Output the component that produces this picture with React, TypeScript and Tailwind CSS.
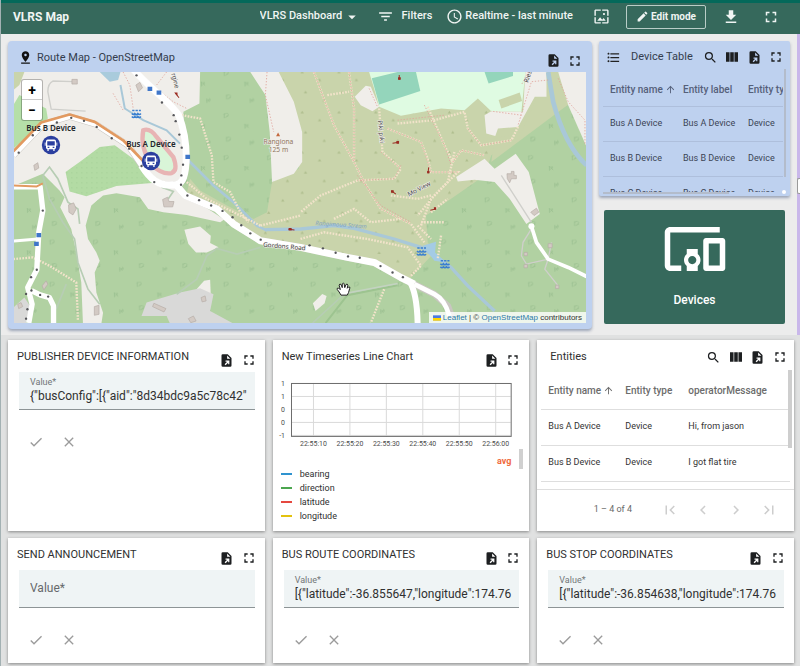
import React, { useId } from "react";
import {
  MdAccessTime,
  MdArrowDropDown,
  MdArrowUpward,
  MdCheck,
  MdChevronLeft,
  MdChevronRight,
  MdClose,
  MdDownload,
  MdEdit,
  MdFilterList,
  MdFirstPage,
  MdFormatListBulleted,
  MdFullscreen,
  MdLastPage,
  MdOutlineDevicesOther,
  MdPinDrop,
  MdSearch,
  MdViewColumn,
  MdWallpaper,
} from "react-icons/md";

function ExportIcon() {
  return (
    <svg viewBox="0 0 24 24" className="size-[15px]" fill="currentColor" aria-hidden="true">
      <path
        fillRule="evenodd"
        d="M6 2h8l6 6v12a2 2 0 0 1-2 2H6a2 2 0 0 1-2-2V4a2 2 0 0 1 2-2Zm7 1.800V9h5.200L13 3.800ZM10.500 12v2h2.600L9 18.100l1.500 1.500 4.100-4.100V18h2v-6h-6.100Z"
      />
    </svg>
  );
}

function IconButton({ label, children }: { label: string; children: React.ReactNode }) {
  return (
    <button type="button" aria-label={label} className="flex size-[22px] items-center justify-center">
      {children}
    </button>
  );
}

function WidgetActions({ table = false }: { table?: boolean }) {
  return (
    <div className="flex items-center text-[#1d1f21]">
      {table && (
        <>
          <IconButton label="Search">
            <MdSearch size={15} />
          </IconButton>
          <IconButton label="Columns to display">
            <MdViewColumn size={16} />
          </IconButton>
        </>
      )}
      <IconButton label="Export widget">
        <ExportIcon />
      </IconButton>
      <IconButton label="Fullscreen">
        <MdFullscreen size={16} />
      </IconButton>
    </div>
  );
}

const roadDots: [number, number][] = [
  [58, 262], [100, 210], [172, 172], [215, 158], [253, 167], [291, 185], [336, 219], [388, 250], [425, 302],
  [463, 350], [543, 358], [562, 390], [597, 404], [633, 420], [667, 436], [697, 455], [723, 479], [750, 503],
  [781, 522], [927, 539], [967, 548], [1005, 561], [1042, 572], [1077, 576], [1139, 601], [1175, 620], [1206, 634],
  [410, 31], [486, 112], [521, 150], [527, 168], [538, 208], [545, 247], [549, 298], [544, 330],
  [130, 435], [112, 612], [95, 634], [80, 684], [96, 674], [122, 687], [146, 692], [84, 730], [80, 758],
];

function Waves({ x, y }: { x: number; y: number }) {
  return (
    <g transform={`translate(${x} ${y})`} stroke="#3a7fd0" strokeWidth="4.500" fill="none">
      <path d="M-13 -9h7M-3 -9h7M7 -9h6M-14 0q5 6 9 0q5 6 9 0q5 6 9 0M-14 9q5 6 9 0q5 6 9 0q5 6 9 0" />
    </g>
  );
}

function MapArtwork() {
  return (
    <svg
      viewBox="42 21 1713 750"
      preserveAspectRatio="xMidYMid slice"
      className="block h-full w-full"
      role="img"
      aria-label="Street map around Gordons Road"
      fontFamily="'Noto Sans', sans-serif"
    >
      <defs>
        <pattern id="trees" width="130" height="126" patternUnits="userSpaceOnUse">
          <rect width="130" height="126" fill="#b1d1a2" />
          <g stroke="#9cc091" strokeWidth="2.500" fill="none">
            <path d="M20 22l8-3m-6 0v14m8-16q8 4 0 12m-5 2l10-6" />
            <path d="M82 52l8 2m-6-4v14m8-14q-4 8 3 12m-9-2l9-6" />
            <path d="M28 92l8-3m-7 0v14m8-15q8 4 0 12m-6 2l11-5" />
            <path d="M98 106l9-2m-7-4v14m8-15q5 8-2 12m-4-2l9-6" />
          </g>
        </pattern>
        <pattern id="scrub" width="110" height="120" patternUnits="userSpaceOnUse">
          <rect width="110" height="120" fill="#c9d4ab" />
          <g fill="#afbe8e">
            <path d="M20 25l5-8 5 8ZM72 48l5-8 5 8ZM30 85l5-8 5 8ZM86 110l5-8 5 8Z" />
          </g>
        </pattern>
        <pattern id="orchard" width="15" height="15" patternUnits="userSpaceOnUse">
          <rect width="15" height="15" fill="#b3dba4" />
          <circle cx="7" cy="7" r="1.500" fill="#9fca92" />
        </pattern>
      </defs>

      <rect x="42" y="21" width="1713" height="750" fill="url(#trees)" />

      {/* open land */}
      <g fill="#f0eeea">
        <path d="M42 21H600L598 115L550 140L560 300L545 350L540 380L600 415L672 462L660 470L560 448L490 440L445 430L420 395L350 383L310 390L275 420L258 480L265 520L290 560L300 585L285 620L290 680L310 740L305 773H250L245 650L230 560L215 490L182 425L195 395L180 375L130 325L42 362Z" />
        <path d="M553 492L600 483L632 510L630 532L655 545L620 560H588L565 535Z" />
        <path d="M588 672L612 645L630 642L632 690Z" />
      </g>
      <path d="M42 120L60 90L140 130L145 160L60 235L42 250Z" fill="#b5dfa8" />
      <path d="M42 21H75L60 60L42 75Z" fill="#c9d4ab" />
      <path d="M42 725L75 695L92 720L80 771H42Z" fill="#d9d9d8" />
      <path d="M425 750L440 710L540 680L600 667L640 685L630 735L700 773H510L500 750Z" fill="#d9d9d8" />
      <path d="M198 320L240 290L300 245L345 240L400 280L425 310L465 352L350 362L260 392L210 378Z" fill="url(#orchard)" />
      <path d="M430 195q20-8 40 20l50 60q15 40-5 48q-30 5-60-25q-35-50-25-103Z" fill="#d9f5d8" stroke="#e8b4b4" strokeWidth="13" />

      {/* scrub */}
      <path d="M835 21H1640L1700 118L1470 270L1450 330L1350 400L1275 450L1280 530L1300 560L1225 640L1120 590L900 545L780 525L690 462L600 412L560 385L570 340L600 375L680 420L760 460L800 440L815 350L895 310L905 200L835 21Z" fill="url(#scrub)" />
      <path d="M1640 21H1670L1735 125L1700 118L1470 290L1480 220L1560 200Z" fill="#c9d4ab" />
      <path d="M750 21H835L880 110L905 200L905 290L880 325L815 350L808 200L795 90Z" fill="#f0eeea" />

      {/* school grounds */}
      <path d="M1105 21L1120 70L1135 125L1200 152L1320 130L1390 135L1430 100L1470 138L1560 140L1572 21Z" fill="#dffbe2" />
      <path d="M1113 40L1190 21H1245L1258 78L1135 118Z" fill="#94d5bb" />
      <path d="M1450 21H1535V33L1462 55Z" fill="#94d5bb" />
      <path d="M1492 105L1555 82L1562 108L1500 130Z" fill="#c9d4ab" />

      <g fill="#f0eeea">
        <path d="M1572 21H1635V95H1600L1550 185L1490 190L1482 212L1455 205L1450 150L1470 138L1565 140Z" />
        <path d="M1670 21H1755V245L1700 120Z" />
        <path d="M1095 62L1062 95L1080 120L1115 138L1135 125L1110 65Z" />
        <path d="M1365 335L1450 280L1480 310L1543 265L1582 320L1615 445L1575 475L1525 400L1480 350L1420 343L1370 348Z" />
        <path d="M937 712L965 684L978 690L972 712L945 735Z" />
      </g>

      {/* water */}
      <g fill="none" stroke="#a9c8d8">
        <path d="M362 60L375 130L430 165L500 195L540 235" strokeWidth="6" />
        <path d="M560 280L640 360L700 410L770 480L800 495" strokeWidth="8" />
        <path d="M795 492L900 490L1000 480L1060 488L1180 520L1260 545L1330 590L1350 605L1400 660L1480 735" strokeWidth="10" />
        <path d="M1640 21L1655 110Q1690 240 1755 300" strokeWidth="14" />
      </g>
      <path d="M300 21H362L355 45L330 50Z" fill="#a9cbdc" />
      <path d="M1265 540L1305 528L1302 560L1335 590L1300 585Z" fill="#a4cbe4" />

      {/* tracks */}
      <g fill="none" stroke="#b7cdb4" strokeWidth="5">
        <path d="M130 330L150 305L175 340L205 410L235 430L240 475M130 330L150 400L190 470L225 520L235 590L265 670L300 715" />
        <path d="M530 685L590 640L620 570L650 548L710 565L780 545" />
        <path d="M936 771L1030 685L1190 655" />
        <path d="M200 655L170 730" />
        <path d="M485 365L520 378L505 400" />
      </g>
      <path d="M975 771L1040 688L1190 658" fill="none" stroke="#9dc490" strokeWidth="6" />
      <path d="M1020 685L1190 653" fill="none" stroke="#c3d3c0" strokeWidth="5" />
      <g fill="none" stroke="#cfcfcb" strokeWidth="4">
        <path d="M222 50L160 48Q145 55 145 80L155 132L258 138" />
        <path d="M1500 330L1590 470M1560 570L1565 530L1590 490M1640 580L1575 595L1560 570M1650 530L1640 580L1630 610L1670 660" />
      </g>

      {/* foot paths */}
      <g fill="none" stroke="#f2e3ca" strokeWidth="7" strokeDasharray="5 4">
        <path d="M545 150L600 160L635 270L640 350L690 380L720 440L745 470M560 350L620 400L700 440L780 480" />
        <path d="M940 21L1000 180L1060 290L1090 350L1140 430L1230 475L1270 530" />
        <path d="M1045 21L1060 130L1060 290M980 90L1045 80" />
        <path d="M1135 130L1145 260L1200 310L1180 340L1070 345L960 390L900 440" />
        <path d="M1160 190L1260 230L1280 280L1290 320L1370 320L1300 390L1250 450" />
        <path d="M1190 175L1300 165L1390 140L1400 190L1440 240L1530 225L1550 185" />
        <path d="M1280 125L1330 240L1355 290M1355 290L1380 255L1450 270M1360 260L1340 350L1290 400L1260 480" />
        <path d="M1170 390L1250 400L1290 390M1260 470H1330M1290 440L1340 400" />
        <path d="M900 520L970 500L1100 520L1220 545L1260 600L1230 630M1000 460L1060 430L1110 470L1200 460" />
        <path d="M780 480L900 450M42 580L100 575L150 600L230 650L235 765M1150 670L1110 771" />
        <path d="M1320 510L1310 580M1250 480L1290 520" />
      </g>
      <g fill="none" stroke="#e0a39b" strokeWidth="2.500" strokeDasharray="4 5">
        <path d="M940 21L1000 180L1060 290L1090 350L1140 430L1230 475M1045 21L1060 130V290M1140 260L1200 310M1160 190L1260 230L1290 320H1370" />
        <path d="M1270 120L1330 240L1350 300M1070 330L1140 420L1230 470M1200 300L1180 340L1070 345M1355 290L1380 255L1450 270M1400 190L1440 240L1530 225" />
        <path d="M800 21L795 90L820 200M370 21L390 60L400 130M340 85L370 135M430 40L520 110L560 130M500 21L470 60" />
        <path d="M1640 45L1590 50L1550 180M1560 150L1470 138M1580 21L1560 60M1670 40L1700 110L1750 165V240M1105 70L1130 125M1190 165L1330 150" />
      </g>

      {/* roads */}
      <g fill="none" strokeLinejoin="round">
        <g stroke="#c9c6c1">
          <path d="M400 13C450 70 510 110 536 150C555 200 560 240 558 290C555 340 545 362 515 358C475 362 450 340 425 300L385 240L290 178L210 154L130 178L42 270" strokeWidth="19" />
          <path d="M525 355L555 390L650 430L700 475L780 525L900 545L1040 575L1120 590L1200 635L1240 655L1300 685L1340 720L1355 760" strokeWidth="20" />
        </g>
        <g stroke="#ffffff">
          <path d="M425 300L385 240L290 178L210 154L130 178L42 270" strokeWidth="16" />
          <path d="M400 13C450 70 510 110 536 150C555 200 560 240 558 290C555 340 545 362 515 358C475 362 450 340 425 300" strokeWidth="21" />
          <path d="M525 355L555 390L650 430L700 475L780 525L900 545L1040 575L1120 590L1200 635L1240 655" strokeWidth="21" />
          <path d="M1240 655L1300 685Q1330 700 1345 750" strokeWidth="14" />
          <path d="M1225 645Q1248 680 1250 771" strokeWidth="18" />
          <path d="M42 364H122L130 435L118 500L112 612L85 665L98 715L88 771M96 674L122 687L150 695L162 720V771" strokeWidth="16" />
          <path d="M42 526L115 520" strokeWidth="9" />
          <path d="M1590 482L1605 530L1640 580L1700 605L1755 632" strokeWidth="11" />
        </g>
        <path d="M42 258L125 172L210 148L285 170L370 225L435 292" stroke="#e29a61" strokeWidth="8" />
        <path d="M42 360L112 363L130 354" stroke="#e29a61" strokeWidth="6" />
      </g>
      <circle cx="1590" cy="482" r="9" fill="#ffffff" />
      <g fill="#55565a">
        {roadDots.map(([x, y]) => (
          <circle key={`${x}-${y}`} cx={x} cy={y} r="3.500" />
        ))}
      </g>

      {/* buildings */}
      <g fill="#d3cac4" stroke="#b5aca7" strokeWidth="2">
        <path d="M217 43L233 43V57H217ZM408 60L420 52L428 68L416 80ZM103 300L115 292L118 308L106 315ZM207 418L222 412L230 430L220 448L208 440ZM488 402L503 395L507 408L522 408L518 424L492 424ZM1517 325H1530V318H1538V330H1545V340H1530L1525 352L1518 340ZM1588 440L1605 428L1612 440L1598 450Z" />
        <path d="M462 712L498 728L492 738L458 722ZM565 758L580 750L588 765L572 770ZM603 695L615 690L618 705L606 708ZM284 722L298 718L298 745L284 748ZM128 660L140 645L145 655L133 672ZM55 715L65 710L70 722L58 728Z" />
        <path d="M1568 560H1578V570H1568ZM1640 534H1652V546H1640ZM1662 658H1672V668H1662ZM1568 596H1578V606H1568Z" />
      </g>

      {/* bus stops and small symbols */}
      <g fill="#3f76c9">
        <path d="M443 65H457V78H443ZM470 76H484V89H470ZM556 268H570V281H556ZM111 502H125V515H111ZM104 528H118V541H104Z" />
      </g>
      <g stroke="#9b2c22" strokeWidth="3" fill="#9b2c22">
        <path d="M1175 234L1194 231M1283 306L1281 324M1172 376L1185 386M1288 434L1305 430M864 491L882 493M1195 30V44M526 84L537 98" />
        <path d="M1188 229h5v5h-5ZM1280 318h4v4h-4ZM1172 376h5v4h-5ZM1300 427h4v4h-4ZM866 489h6v4h-6ZM1193 38h5v5h-5ZM526 84h5v5Z" />
      </g>
      <path d="M827 213L833 202L839 213Z" fill="#c4693f" />
      <Waves x={410} y={145} />
      <Waves x={1262} y={556} />
      <Waves x={1332} y={594} />

      {/* names */}
      <g fontSize="20" fill="#91765d" stroke="#f0eeea" strokeWidth="3" paintOrder="stroke" textAnchor="middle">
        <text x="834" y="237">Rangiona</text>
        <text x="834" y="261">125 m</text>
      </g>
      <g fontSize="19" fill="#3f3f3f" stroke="#f4f2ee" strokeWidth="3" paintOrder="stroke">
        <text x="788" y="543" transform="rotate(5 788 543)">Gordons Road</text>
        <text x="1224" y="394" transform="rotate(-28 1224 394)">Mo View</text>
        <text x="1131" y="166" transform="rotate(84 1131 166)">Piki piki</text>
        <text x="514" y="26" transform="rotate(76 514 26)">rgine</text>
        <text x="1580" y="54" transform="rotate(-72 1580 54)">Ries</text>
      </g>
      <text x="944" y="478" fontSize="18" fontStyle="italic" fill="#7fa3c0" transform="rotate(4 944 478)">
        Rangimoua Stream
      </text>
    </svg>
  );
}

function BusMarker({ name, className }: { name: string; className: string }) {
  return (
    <div className={`absolute flex w-16 -translate-x-1/2 flex-col items-center ${className}`}>
      <span className="font-['Noto_Sans',sans-serif] text-[8px] leading-[11px] font-semibold whitespace-nowrap text-[#22262b]">
        {name}
      </span>
      <svg viewBox="0 0 24 24" className="mt-0.5 size-5" aria-hidden="true">
        <circle cx="12" cy="12" r="11" fill="#2b3f9f" />
        <rect x="6" y="5.500" width="12" height="11.500" rx="2" fill="#fff" />
        <path d="M7.500 7.500h9v5h-9ZM8 14.200h2v1.300H8ZM14 14.200h2v1.300h-2Z" fill="#2b3f9f" />
        <path d="M4.500 9h1v4h-1ZM18.500 9h1v4h-1ZM7.500 17h2v2h-2ZM14.500 17h2v2h-2Z" fill="#fff" />
      </svg>
    </div>
  );
}

function RouteMap() {
  return (
    <section className="flex h-72 flex-col rounded-sm bg-[#bed1ef] px-1.5 pb-1.5 shadow-[0_2px_3px_rgba(60,80,120,0.45)]">
      <div className="flex h-[31px] items-center justify-between pt-2 pl-1">
        <h2 className="flex items-center gap-1 pb-1.5 text-[11px] leading-4 text-[#343d4d]">
          <MdPinDrop size={15} className="text-[#111]" />
          Route Map - OpenStreetMap
        </h2>
        <WidgetActions />
      </div>
      <div className="relative min-h-0 flex-1 overflow-hidden">
        <MapArtwork />
        <div className="absolute top-2 left-2 flex w-5 flex-col overflow-hidden rounded-xs bg-white text-[14px] font-bold text-black shadow-[0_0_0_1px_rgba(0,0,0,0.25)]">
          <button type="button" aria-label="Zoom in" className="h-5 border-b border-[#ccc] leading-4">
            +
          </button>
          <button type="button" aria-label="Zoom out" className="h-5 leading-4">
            −
          </button>
        </div>
        <BusMarker name="Bus B Device" className="top-[50px] left-[37px]" />
        <BusMarker name="Bus A Device" className="top-[66px] left-[137px]" />
        <svg viewBox="0 0 24 24" className="absolute top-[210px] left-[322px] size-[15px]" aria-hidden="true">
          <path
            d="M8 21L5 16L2 12Q1 9 4 10L7 12L5 5Q6 2 8 4L10 9V3Q12 0 13 3L14 9L16 4Q18 2 19 5L18 10L20 8Q23 7 22 10L20 17L18 21Z"
            fill="#fff"
            stroke="#222"
            strokeWidth="1.600"
            strokeLinejoin="round"
          />
        </svg>
        <div className="absolute right-0 bottom-0 flex h-[11px] items-center gap-0.5 bg-white/80 px-1 font-['Liberation_Sans',sans-serif] text-[8px] leading-[11px] text-[#333]">
          <svg viewBox="0 0 12 8" className="h-1.5 w-2" aria-hidden="true">
            <path fill="#4c7be1" d="M0 0h12v4H0z" />
            <path fill="#ffd500" d="M0 4h12v3H0z" />
            <path fill="#e0bc00" d="M0 7h12v1H0z" />
          </svg>
          <span>
            <a href="#leaflet" className="text-[#2b7aa8]">Leaflet</a> | ©{" "}
            <a href="#osm" className="text-[#2b7aa8]">OpenStreetMap</a> contributors
          </span>
        </div>
      </div>
    </section>
  );
}

function DeviceTable() {
  const rows = ["Bus A Device", "Bus B Device", "Bus C Device"];
  return (
    <section className="relative h-[155px] overflow-hidden rounded-xs bg-[#bed1ef] pr-[3px] pl-1 shadow-[0_2px_3px_rgba(60,80,120,0.45)]">
      <div className="flex h-8 items-center justify-between pl-[3px]">
        <h2 className="flex items-center gap-2.5 text-[11px] leading-4 whitespace-nowrap text-[#343d4d]">
          <MdFormatListBulleted size={15} className="text-[#222]" />
          Device Table
        </h2>
        <WidgetActions table />
      </div>
      <div className="mr-1 h-[119px] overflow-hidden">
        <table className="w-[220px] table-fixed text-left text-[9px] text-[#3b4454]">
          <thead>
            <tr className="h-[33px] border-b border-[#aebfdc] text-[10px] text-[#55607a]">
              <th className="w-[80px] pl-[7px] font-medium">
                <span className="flex items-center gap-0.5 whitespace-nowrap">
                  Entity name <MdArrowUpward size={11} />
                </span>
              </th>
              <th className="w-[65px] font-medium">Entity label</th>
              <th className="font-medium">Entity type</th>
            </tr>
          </thead>
          <tbody>
            {rows.map((r) => (
              <tr key={r} className="h-[35px] border-b border-[#aebfdc]">
                <td className="pl-[7px]">{r}</td>
                <td>{r}</td>
                <td>Device</td>
              </tr>
            ))}
          </tbody>
        </table>
      </div>
      <div className="absolute top-7 right-1 h-[108px] w-0.5 bg-[#b3bccb]" />
      <div className="absolute bottom-0.5 left-1 h-0.5 w-[126px] bg-[#b3bccb]" />
      <div className="absolute right-1 bottom-0.5 size-1 rounded-full bg-white" />
    </section>
  );
}

function Card({ title, table = false, children }: { title: string; table?: boolean; children: React.ReactNode }) {
  return (
    <section className="flex min-w-0 flex-col overflow-hidden bg-white shadow-[0_1px_3px_rgba(0,0,0,0.4)]">
      <div className={`flex h-8 shrink-0 items-start justify-between ${table ? "pr-[3px] pl-[13px]" : "pr-[5px] pl-[9px]"}`}>
        <h2 className="pt-[9px] text-[11px] leading-4 whitespace-nowrap text-[#303030]">{title}</h2>
        <div className={table ? "pt-1.5" : "pt-[9px]"}>
          <WidgetActions table={table} />
        </div>
      </div>
      {children}
    </section>
  );
}

function ValueCard({ title, value }: { title: string; value: string }) {
  const id = useId();
  return (
    <Card title={title}>
      <div className="mr-2.5 ml-[11px] h-[38px] border-b border-[#8d9496] bg-[#eff4f5] pl-[11px]">
        {value && (
          <label htmlFor={id} className="block pt-1 text-[9px] leading-3 text-[#727678]">
            Value*
          </label>
        )}
        {!value && (
          <label htmlFor={id} className="sr-only">
            Value
          </label>
        )}
        <input
          id={id}
          defaultValue={value}
          placeholder="Value*"
          className={`block w-full bg-transparent text-[12px] text-[#303030] outline-none placeholder:text-[#66696b] ${
            value ? "h-4 leading-4" : "h-9"
          }`}
        />
      </div>
      <div className="flex gap-[17px] pt-6 pl-5 text-[#9b9b9b]">
        <button type="button" aria-label="Save" className="size-4">
          <MdCheck size={16} />
        </button>
        <button type="button" aria-label="Discard" className="size-4">
          <MdClose size={16} />
        </button>
      </div>
    </Card>
  );
}

const series = [
  { name: "bearing", color: "bg-[#2f93cf]" },
  { name: "direction", color: "bg-[#4ca64f]" },
  { name: "latitude", color: "bg-[#e5483f]" },
  { name: "longitude", color: "bg-[#e3c20e]" },
];

function LineChart() {
  const times = ["22:55:10", "22:55:20", "22:55:30", "22:55:40", "22:55:50", "22:56:00"];
  const levels = ["1", "1", "0", "0", "-1"];
  return (
    <svg viewBox="0 0 257 75" className="block w-full" fontSize="7" fill="#4c4c4c" role="img" aria-label="Empty line chart">
      <g stroke="#dadada">
        {times.map((t, i) => (
          <path key={t} d={`M${40.5 + i * 36.5} 11V65`} />
        ))}
        {levels.map((_, i) => (
          <path key={i} d={`M18 ${11.5 + i * 13}H238`} />
        ))}
      </g>
      <rect x="18.500" y="11.500" width="220" height="53" fill="none" stroke="#6d6d6d" />
      {levels.map((l, i) => (
        <text key={i} x="12" y={14 + i * 13} textAnchor="end">
          {l}
        </text>
      ))}
      {times.map((t, i) => (
        <text key={t} x={40.5 + i * 36.5} y="74" textAnchor="middle">
          {t}
        </text>
      ))}
    </svg>
  );
}

function ChartCard() {
  return (
    <Card title="New Timeseries Line Chart">
      <LineChart />
      <div className="relative pr-[18px] pl-2">
        <div className="pt-2 text-right text-[9px] leading-3 font-bold text-[#f0693c]">avg</div>
        <ul className="text-[9px] leading-[14px] text-[#303030]">
          {series.map((s) => (
            <li key={s.name} className="flex items-center gap-2">
              <span className={`h-0.5 w-[11px] ${s.color}`} />
              {s.name}
            </li>
          ))}
        </ul>
        <div className="absolute top-0.5 right-1.5 h-5 w-1 bg-[#d0d0d0]" />
      </div>
    </Card>
  );
}

function EntitiesCard() {
  const rows = [
    ["Bus A Device", "Device", "Hi, from jason"],
    ["Bus B Device", "Device", "I got flat tire"],
  ];
  return (
    <Card title="Entities" table>
      <div className="relative h-[118px] shrink-0 border-b border-[#dedede] pr-1 pl-1">
        <table className="w-full table-fixed text-left text-[9px] text-[#333]">
          <thead>
            <tr className="h-[37px] border-b border-[#dedede] text-[10px] text-[#6c6c6c]">
              <th className="w-[84px] pl-[7px] font-medium">
                <span className="flex items-center gap-0.5 whitespace-nowrap">
                  Entity name <MdArrowUpward size={11} />
                </span>
              </th>
              <th className="w-[63px] font-medium">Entity type</th>
              <th className="font-medium">operatorMessage</th>
            </tr>
          </thead>
          <tbody>
            {rows.map(([name, type, message]) => (
              <tr key={name} className="h-9 border-b border-[#dedede]">
                <td className="pl-[7px]">{name}</td>
                <td>{type}</td>
                <td>{message}</td>
              </tr>
            ))}
          </tbody>
        </table>
        <div className="absolute -top-0.5 right-0.5 h-[78px] w-1 bg-[#cecece]" />
      </div>
      <div className="flex h-10 items-center justify-end gap-[15px] pr-4 text-[#cdcdcd]">
        <span className="mr-3.5 text-[9px] text-[#686868]">1 – 4 of 4</span>
        <button type="button" aria-label="First page"><MdFirstPage size={18} /></button>
        <button type="button" aria-label="Previous page"><MdChevronLeft size={18} /></button>
        <button type="button" aria-label="Next page"><MdChevronRight size={18} /></button>
        <button type="button" aria-label="Last page"><MdLastPage size={18} /></button>
      </div>
    </Card>
  );
}

function TopBar() {
  return (
    <header className="flex h-[34px] items-center justify-between border-t-[3px] border-[#04695a] bg-[#36695c] pr-5 pb-1 pl-3 text-[11px] font-medium text-[#f0f5f3]">
      <h1 className="text-[12px] font-bold">VLRS Map</h1>
      <div className="flex items-center">
        <div className="flex items-center">
          <select aria-label="Dashboard" className="appearance-none bg-transparent outline-none">
            <option>VLRS Dashboard</option>
          </select>
          <MdArrowDropDown size={18} />
        </div>
        <button type="button" className="ml-4 flex items-center gap-2">
          <MdFilterList size={17} />
          Filters
        </button>
        <button type="button" className="ml-3.5 flex items-center gap-0.5">
          <MdAccessTime size={17} />
          Realtime - last minute
        </button>
        <button type="button" aria-label="Dashboard image" className="ml-5">
          <MdWallpaper size={17} />
        </button>
        <button type="button" className="ml-4 flex h-6 w-20 items-center justify-center gap-0.5 rounded-xs border border-[#b9cdc7] text-[10px] font-bold">
          <MdEdit size={13} />
          Edit mode
        </button>
        <button type="button" aria-label="Export dashboard" className="ml-4">
          <MdDownload size={18} />
        </button>
        <button type="button" aria-label="Fullscreen" className="ml-[22px]">
          <MdFullscreen size={18} />
        </button>
      </div>
    </header>
  );
}

export default function App() {
  return (
    <div className="min-h-screen border-l border-[#a3b1b3] bg-[#e0e1e1] font-[Roboto,sans-serif]">
      <TopBar />
      <main>
        <div className="relative grid grid-cols-[minmax(0,584fr)_minmax(0,191fr)] gap-[7px] border-r-[3px] border-[#c9b7ea] bg-[#ececec] pt-[7px] pr-[7px] pb-1.5 pl-[7px]">
          <RouteMap />
          <div className="flex flex-col">
            <DeviceTable />
            <button
              type="button"
              className="mx-[5px] mt-3.5 flex h-[114px] flex-col items-center justify-between rounded-xs bg-[#36695c] pt-1.5 pb-4 text-[12px] leading-4 font-medium text-white"
            >
              <MdOutlineDevicesOther size={66} />
              Devices
            </button>
          </div>
          <div className="absolute top-[144px] -right-[3px] h-4 w-[3px] rounded-l-xs border border-r-0 border-[#9a9a9a] bg-white" />
        </div>
        <div className="grid grid-cols-3 gap-x-2 gap-y-[7px] pt-[5px] pr-1.5 pb-1 pl-[7px]">
          <div className="grid h-[191px]">
            <ValueCard title="PUBLISHER DEVICE INFORMATION" value={'{"busConfig":[{"aid":"8d34bdc9a5c78c42"'} />
          </div>
          <div className="grid h-[191px]">
            <ChartCard />
          </div>
          <div className="grid h-[191px]">
            <EntitiesCard />
          </div>
          <div className="grid h-[125px]">
            <ValueCard title="SEND ANNOUNCEMENT" value="" />
          </div>
          <div className="grid h-[125px]">
            <ValueCard title="BUS ROUTE COORDINATES" value={'[{"latitude":-36.855647,"longitude":174.76'} />
          </div>
          <div className="grid h-[125px]">
            <ValueCard title="BUS STOP COORDINATES" value={'[{"latitude":-36.854638,"longitude":174.76'} />
          </div>
        </div>
      </main>
    </div>
  );
}
